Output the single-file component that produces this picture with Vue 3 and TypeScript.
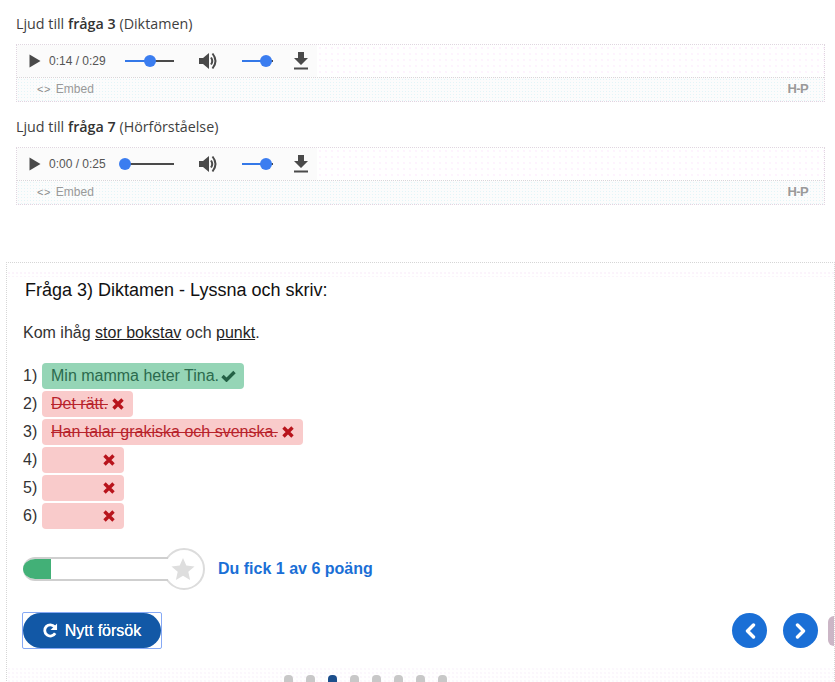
<script setup lang="ts">
interface Player { before: string; bold: string; after: string; time: string; pct: number }
interface Row { n: number; text: string; ok: boolean; empty?: boolean }
const players: Player[] = [
  { before: 'Ljud till ', bold: 'fråga 3', after: ' (Diktamen)', time: '0:14 / 0:29', pct: 50 },
  { before: 'Ljud till ', bold: 'fråga 7', after: ' (Hörförståelse)', time: '0:00 / 0:25', pct: 0 },
]
const rows: Row[] = [
  { n: 1, text: 'Min mamma heter Tina.', ok: true },
  { n: 2, text: 'Det rätt.', ok: false },
  { n: 3, text: 'Han talar grakiska och svenska.', ok: false },
  { n: 4, text: '', ok: false, empty: true },
  { n: 5, text: '', ok: false, empty: true },
  { n: 6, text: '', ok: false, empty: true },
]
const dots = [0, 1, 2, 3, 4, 5, 6, 7]
</script>

<template>
  <div class="page">
    <section v-for="p in players" :key="p.bold" class="audio-block">
      <p class="caption">{{ p.before }}<b>{{ p.bold }}</b>{{ p.after }}</p>
      <div class="h5p">
        <div class="player-row">
          <div class="player">
            <svg class="play" viewBox="0 0 12 14" width="12" height="14"><path d="M0.5 0.5 L11.5 7 L0.5 13.5 Z" fill="#4a4a4a" /></svg>
            <span class="time">{{ p.time }}</span>
            <div class="seek">
              <div class="seek-on" :style="{ width: p.pct + '%' }"></div>
              <div class="thumb"></div>
              <div class="seek-off"></div>
            </div>
            <svg class="speaker" viewBox="0 0 20 20" width="20" height="20">
              <path d="M1 7 H5 L11 2 V18 L5 13 H1 Z" fill="#4a4a4a" />
              <path d="M13 6.5 Q15.5 10 13 13.5 M14.5 2.5 Q20.5 10 14.5 17.5" fill="none" stroke="#4a4a4a" stroke-width="2" />
            </svg>
            <div class="volume">
              <div class="vol-on"></div>
              <div class="thumb"></div>
              <div class="vol-off"></div>
            </div>
            <svg class="download" viewBox="0 0 14 18" width="14" height="18">
              <path d="M4 0 H10 V6 H14 L7 13 L0 6 H4 Z M0 15.5 H14 V17.5 H0 Z" fill="#4a4a4a" />
            </svg>
          </div>
        </div>
        <div class="embed-row">
          <span class="embed-icon">&lt;&gt;</span>
          <span class="embed">Embed</span>
          <span class="logo">H-P</span>
        </div>
      </div>
    </section>

    <section class="card">
      <div class="band"></div>
      <h2 class="title">Fråga 3) Diktamen - Lyssna och skriv:</h2>
      <p class="intro">Kom ihåg <u>stor bokstav</u> och <u>punkt</u>.</p>
      <ol class="answers">
        <li v-for="r in rows" :key="r.n" class="answer">
          <span class="num">{{ r.n }})</span>
          <span class="badge" :class="[r.ok ? 'ok' : 'bad', { empty: r.empty }]">
            <span v-if="r.text" class="txt">{{ r.text }}</span>
            <svg v-if="r.ok" class="mark" viewBox="0 0 15 12" width="15" height="12">
              <path d="M1.5 6 L5.5 10 L13.5 2" fill="none" stroke="#236145" stroke-width="3.4" />
            </svg>
            <svg v-else class="mark" viewBox="0 0 12 12" width="12" height="12">
              <path d="M1.5 1.5 L10.5 10.5 M10.5 1.5 L1.5 10.5" fill="none" stroke="#b8141c" stroke-width="3.4" />
            </svg>
          </span>
        </li>
      </ol>

      <div class="score">
        <div class="bar">
          <div class="bar-track"><div class="bar-fill"></div></div>
          <div class="star-ring">
            <svg class="star" viewBox="0 0 24 24" width="24" height="24"><path d="M12 1 L15.3 8.6 L23.5 9.4 L17.3 14.8 L19.1 22.9 L12 18.7 L4.9 22.9 L6.7 14.8 L0.5 9.4 L8.7 8.6 Z" fill="#dedede" /></svg>
          </div>
        </div>
        <span class="score-text">Du fick 1 av 6 poäng</span>
      </div>

      <div class="actions">
        <div class="focus">
          <button class="retry" type="button">
            <svg viewBox="0 0 16 16" width="15" height="15">
              <path d="M13 11 A6 6 0 1 1 12.4 4" fill="none" stroke="#fff" stroke-width="3" />
              <path d="M15 0.5 V7.5 H8 Z" fill="#fff" />
            </svg>
            <span>Nytt försök</span>
          </button>
        </div>
        <div class="nav">
          <button class="circle" type="button" aria-label="Föregående">
            <svg viewBox="0 0 12 16" width="12" height="16"><path d="M9.5 2 L3.5 8 L9.5 14" fill="none" stroke="#fff" stroke-width="3.4" stroke-linecap="round" stroke-linejoin="round" /></svg>
          </button>
          <button class="circle" type="button" aria-label="Nästa">
            <svg viewBox="0 0 12 16" width="12" height="16"><path d="M2.5 2 L8.5 8 L2.5 14" fill="none" stroke="#fff" stroke-width="3.4" stroke-linecap="round" stroke-linejoin="round" /></svg>
          </button>
          <span class="next-edge"></span>
        </div>
      </div>

      <div class="dots-zone">
        <span v-for="d in dots" :key="d" class="dot" :class="{ active: d === 2 }"></span>
      </div>
    </section>
  </div>
</template>

<style>
html, body { margin: 0; background: #fff; }
</style>

<style scoped>
.page {
  width: 835px;
  height: 682px;
  overflow: hidden;
  box-sizing: border-box;
  padding-top: 14px;
  background: #fff;
  font-family: "Liberation Sans", Arial, sans-serif;
}
.audio-block { padding: 0 10px 0 16px; margin-bottom: 15px; }
.caption {
  margin: 0 0 10px;
  font: 14.3px/20px "Open Sans", sans-serif;
  color: #3f3f3f;
}
.caption b { font-weight: 600; color: #333; }
.h5p {
  border: 1px dotted #e0d6e0;
  height: 56px;
  box-sizing: content-box;
  background-image: radial-gradient(circle, #fbe6fb 0.6px, transparent 0.8px);
  background-size: 6px 6px;
}
.player-row { height: 32px; border-bottom: 1px dotted #d8d8d8; }
.player {
  width: 300px;
  height: 32px;
  display: flex;
  align-items: center;
  padding-left: 12px;
  box-sizing: border-box;
  background: #fbfbfb;
}
.play { flex: none; }
.time {
  margin-left: 8px;
  width: 58px;
  font: 12px/14px "Liberation Sans", sans-serif;
  color: #555;
  white-space: nowrap;
}
.seek, .volume { display: flex; align-items: center; }
.seek { margin-left: 18px; width: 49px; }
.seek-on { height: 2px; background: #3478e8; flex: none; }
.seek-off { height: 2px; background: #4a4a4a; flex: 1; }
.thumb {
  width: 12px;
  height: 12px;
  flex: none;
  margin: 0 -6px;
  border-radius: 50%;
  background: #3b7df0;
  position: relative;
}
.speaker { margin-left: 24px; flex: none; }
.volume { margin-left: 24px; width: 31px; }
.vol-on { width: 24px; height: 2px; background: #3478e8; flex: none; }
.vol-off { height: 2px; background: #4a4a4a; flex: 1; }
.download { margin-left: 21px; flex: none; }
.embed-row {
  height: 23px;
  display: flex;
  align-items: center;
  padding: 0 16px 2px 20px;
  box-sizing: border-box;
  background-color: #fcfcfc;
  background-image: radial-gradient(circle, #e3f5f8 0.6px, transparent 0.8px);
  background-size: 3px 3px;
}
.embed-icon { font: 11px/12px "Liberation Sans", sans-serif; color: #8a8a8a; letter-spacing: 0.5px; }
.embed { margin-left: 5px; font: 12px/14px "Liberation Sans", sans-serif; color: #999; }
.logo { margin-left: auto; font: 700 13px/12px "Liberation Sans", sans-serif; color: #9a9a9a; letter-spacing: -0.6px; }

.card {
  margin: 57px 0 0 6px;
  width: 829px;
  height: 425px;
  border: 1px dotted #d6d6d6;
  border-bottom: 0;
  box-sizing: border-box;
  padding: 0 0 0 16px;
  overflow: hidden;
}
.band {
  height: 6px;
  margin: 8px 0 0 -16px;
  background-image: radial-gradient(circle, #f6e6f6 0.6px, transparent 0.8px);
  background-size: 4px 4px;
}
.title {
  margin: 1px 0 0 2px;
  font: 400 18px/24px "Liberation Sans", sans-serif;
  color: #111;
}
.intro {
  margin: 21px 0 0;
  font: 16px/20px "Liberation Sans", sans-serif;
  color: #333;
}
.intro u { color: #1f1f1f; }
.answers { list-style: none; margin: 19px 0 0; padding: 0; }
.answer { height: 28px; display: flex; align-items: center; }
.num {
  width: 19px;
  font: 16px/20px "Liberation Sans", sans-serif;
  color: #333;
}
.badge {
  height: 26px;
  border-radius: 4px;
  display: flex;
  align-items: center;
  gap: 3px;
  padding: 0 9px;
  box-sizing: border-box;
  font: 16px/20px "Liberation Sans", sans-serif;
}
.badge.ok { background: #95d5b6; color: #2b6a4d; padding-right: 8px; }
.badge.bad { background: #f9cbcb; color: #b8232b; }
.badge.bad .txt { text-decoration: line-through; }
.badge.empty { width: 82px; justify-content: flex-end; padding-right: 9px; }
.badge.ok .mark { margin-left: -1px; }
.badge.bad .mark { margin-left: 1px; }
.score { margin-top: 17px; display: flex; align-items: center; height: 44px; }
.bar { width: 182px; display: flex; align-items: center; }
.bar-track {
  width: 145px;
  height: 24px;
  flex: none;
  box-sizing: border-box;
  border: solid #cfcfcf;
  border-width: 2px 0;
  border-radius: 12px 0 0 12px;
  overflow: hidden;
  background: #fff;
  position: relative;
  z-index: 1;
}
.bar-fill { width: 28px; height: 24px; background: #42b077; margin-top: -2px; }
.star-ring {
  width: 42px;
  height: 42px;
  flex: none;
  box-sizing: border-box;
  border: 2px solid #dcdcdc;
  border-radius: 50%;
  margin-left: -5px;
  background: #fff;
  display: flex;
  align-items: center;
  justify-content: center;
}
.star { margin-right: 2px; }
.score-text {
  margin-left: 13px;
  font: 700 16px/20px "Liberation Sans", sans-serif;
  color: #1a6fd6;
}
.actions {
  margin-top: 21px;
  display: flex;
  align-items: center;
  justify-content: space-between;
}
.focus { border: 1px solid #86a9f5; border-radius: 2px; margin-left: -1px; height: 35px; display: flex; align-items: center; }
.retry {
  width: 138px;
  height: 35px;
  border: 0;
  border-radius: 18px;
  background: #1258a6;
  color: #fff;
  display: flex;
  align-items: center;
  justify-content: center;
  gap: 7px;
  font: 16px/20px "Liberation Sans", sans-serif;
  text-shadow: 0 0 0.6px #fff;
  padding: 0;
}
.nav { display: flex; align-items: center; gap: 16px; }
.circle {
  width: 35px;
  height: 35px;
  border: 0;
  padding: 0;
  border-radius: 50%;
  background: #1a6fd6;
  display: flex;
  align-items: center;
  justify-content: center;
}
.next-edge {
  width: 6px;
  height: 30px;
  margin-left: -6px;
  border-radius: 6px 0 0 6px;
  background: #cbb6c6;
}
.dots-zone {
  margin: 18px 0 0 -16px;
  padding: 8px 0 0 277px;
  display: flex;
  gap: 13px;
  background-image: radial-gradient(circle, #f7eef9 0.6px, transparent 0.8px);
  background-size: 4px 4px;
}
.dot { width: 9px; height: 12px; border-radius: 4px 4px 0 0; background: #c8c8c8; flex: none; }
.dot.active { background: #1c4f8c; }
</style>
